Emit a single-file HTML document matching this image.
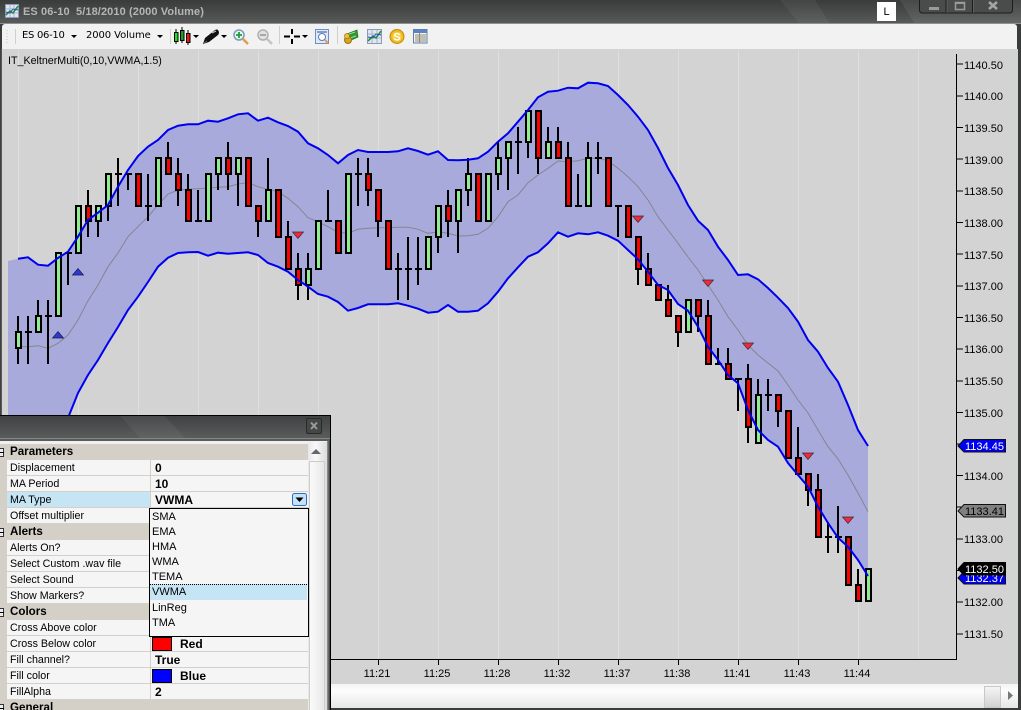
<!DOCTYPE html>
<html><head><meta charset="utf-8">
<style>
html,body{margin:0;padding:0;background:#333;width:1021px;height:710px;overflow:hidden}
#w{position:relative;width:1021px;height:710px;overflow:hidden;font-family:"Liberation Sans",sans-serif;background:#3a3c3c}
#w svg{position:absolute;left:0;top:0}
.a{position:absolute;white-space:pre}
.r{position:absolute;left:0;width:308px;height:15px;border-bottom:1px solid #d4d0c8;background:#f5f5f5;font-size:10.7px;line-height:17px;color:#000}
.r i{position:absolute;left:0;top:0;width:7px;height:16px;background:#d4d0c8}
.r u{position:absolute;left:150px;top:0;width:1px;height:16px;background:#d4d0c8}
.r span{position:absolute;left:10px;top:0}
.r b{position:absolute;left:155px;top:0;font-size:12px}
.h{position:absolute;left:0;width:308px;height:16px;background:#d4d0c8;font-weight:bold;font-size:11.6px;line-height:16px}
.h span{position:absolute;left:10px;top:0}
.h s{position:absolute;left:-5px;top:4px;width:7px;height:7px;border:1px solid #333;background:#eee}
.h s:after{content:"";position:absolute;left:1px;top:3px;width:7px;height:1px;background:#000}
.d{position:absolute;left:2px;width:155px;height:15px;font-size:11px;line-height:17px;color:#000}
.sw{position:absolute;left:152px;width:18px;height:12px;border:1px solid #000}
</style></head><body><div id="w">

<!-- title bar -->
<div class="a" style="left:0;top:0;width:1021px;height:24px;background:linear-gradient(#3a3c3c,#4c4e4e 60%,#5a5c5c)"></div>
<svg width="1021" height="24" viewBox="0 0 1021 24">
<polygon points="780,0 815,0 830,24 800,24" fill="#fff" opacity=".05"/>
<polygon points="900,0 1021,0 1021,24 915,24" fill="#fff" opacity=".07"/>
<!-- title icon -->
<rect x="5.500" y="4.500" width="13" height="13" fill="#dfe6f2" stroke="#8b9ab8"/>
<path d="M6 9h12M6 13h12M10 5v12M14 5v12" stroke="#a9b4c9" stroke-width="1"/>
<path d="M6 15l4-4 3 2 5-7" fill="none" stroke="#1e8a2e" stroke-width="1.500"/>
<path d="M6 12l4 1 3-4 5 1" fill="none" stroke="#2a52c0" stroke-width="1"/>
<!-- window buttons -->
<path d="M919.500 0v10q0 3 3 3h87q3 0 3-3V0" fill="#4a4c4c" stroke="#1c1c1c"/>
<path d="M946 0v13M972.500 0v13" stroke="#1c1c1c"/>
<path d="M947 0v13M973.500 0v13" stroke="#6a6a6a" opacity=".6"/>
<rect x="929" y="7" width="10" height="3" fill="#9a9a9a"/>
<rect x="955.500" y="2.500" width="9" height="7" fill="none" stroke="#9a9a9a" stroke-width="1.500"/>
<rect x="955" y="2" width="10" height="2" fill="#9a9a9a"/>
<path d="M989 2l8 7M997 2l-8 7" stroke="#a5a5a5" stroke-width="2.500"/>
</svg>
<div class="a" style="left:23px;top:5px;font:bold 11px/14px 'Liberation Sans',sans-serif;color:#b4b6b6;letter-spacing:.1px">ES 06-10  5/18/2010 (2000 Volume)</div>
<div class="a" style="left:877px;top:2px;width:19px;height:19px;background:#fff;border:0;font-size:11px;line-height:20px;text-align:center;color:#000">L</div>

<!-- toolbar -->
<div class="a" style="left:0;top:23px;width:1021px;height:1px;background:#8f9191"></div>
<div class="a" style="left:2px;top:24px;width:1015px;height:25px;background:#f2f2f2;border-radius:3px 3px 0 0"></div>

<!-- chart -->
<div class="a" style="left:2px;top:49px;width:1016px;height:635px;background:#d3d3d3"></div>
<div class="a" style="left:2px;top:684px;width:1016px;height:24px;background:linear-gradient(#f4f4f4,#fdfdfd 30%,#e6e6e6)"></div>
<div class="a" style="left:984px;top:686px;width:15px;height:20px;background:linear-gradient(#f5f5f5,#d2d2d2);border:1px solid #c8c8c8"></div>

<svg width="1021" height="710" viewBox="0 0 1021 710" style="font-family:'Liberation Sans',sans-serif;font-size:11px">
<!-- toolbar graphics -->
<path d="M7 30v1M7 33v1M7 36v1M7 39v1M7 42v1" stroke="#c4c4c4"/>
<path d="M15.500 29v15M170.500 29v15M279.500 26v18M337.500 26v18" stroke="#cfcfcf"/>
<path d="M71 35h6l-3 3zM157 35h6l-3 3zM193 35h6l-3 3zM221 35h6l-3 3zM302 35h6l-3 3z" fill="#000"/>
<!-- candle icon -->
<path d="M176 29v15M182 27v16M188 30v15" stroke="#000" stroke-width="1"/>
<rect x="174.500" y="32.500" width="3.500" height="9" fill="#1ce01c" stroke="#000"/>
<rect x="180.500" y="30.500" width="3.500" height="10" fill="#1f9d2c" stroke="#000"/>
<rect x="186.500" y="33.500" width="3.500" height="9" fill="#f01616" stroke="#000"/>
<!-- pen -->
<path d="M203 44l2-6 10-8q2-1 3 0l1 2q0 2-1 3l-9 7z" fill="#111"/>
<path d="M212 33l4-2" stroke="#c8c8c8" stroke-width="1"/>
<path d="M203 44l4-3" stroke="#666"/>
<!-- zoom in -->
<circle cx="239" cy="35" r="5" fill="#e8f3fa" stroke="#7f9cb0" stroke-width="1.500"/>
<path d="M243 39l5 5" stroke="#e69a4a" stroke-width="2.500"/>
<path d="M236 35h6M239 32v6" stroke="#18a038" stroke-width="1.800"/>
<!-- zoom out -->
<circle cx="263" cy="35" r="5" fill="#e2e2e2" stroke="#b0b0b0" stroke-width="1.500"/>
<path d="M267 39l5 5" stroke="#c4c4c4" stroke-width="2.500"/>
<path d="M260 35h6" stroke="#a0a0a0" stroke-width="1.800"/>
<!-- crosshair -->
<path d="M284 36.500h6M294 36.500h6M292 29v5M292 39v5" stroke="#000" stroke-width="2"/>
<!-- table magnifier -->
<rect x="315.500" y="29.500" width="13" height="14" fill="#dfe8f6" stroke="#6f8fc0"/>
<rect x="317" y="31" width="10" height="2" fill="#7f9fd0"/>
<circle cx="322" cy="37" r="3.500" fill="#fff" stroke="#5c7fb0"/>
<path d="M325 40l3 3" stroke="#e69a4a" stroke-width="2"/>
<!-- money -->
<path d="M347 34l10-4 1 7-9 4z" fill="#2e9a2e" stroke="#1f6f1f" stroke-width=".700"/>
<path d="M349 34l6-2M350 38l6-2" stroke="#9fe09f"/>
<circle cx="348" cy="40" r="3.500" fill="#d9a520" stroke="#9a7410"/>
<circle cx="347" cy="36" r="2.500" fill="#efc040" stroke="#9a7410" stroke-width=".700"/>
<!-- chart icon -->
<rect x="367.500" y="29.500" width="14" height="14" fill="#dfe6f2" stroke="#8b9ab8"/>
<path d="M368 34h13M368 38h13M372 30v13M377 30v13" stroke="#a9b4c9"/>
<path d="M368 41l5-5 3 2 5-7" fill="none" stroke="#1e8a2e" stroke-width="1.500"/>
<path d="M368 37l5 1 3-4 5 1" fill="none" stroke="#2a52c0"/>
<!-- coin -->
<circle cx="397" cy="36.500" r="7" fill="#efb81c" stroke="#c48a10"/>
<circle cx="397" cy="36.500" r="4.800" fill="#f8d040"/>
<text x="397" y="40.500" text-anchor="middle" font-size="11" font-weight="bold" fill="#fff">S</text>
<!-- table icon -->
<rect x="413.500" y="29.500" width="13.500" height="13.500" fill="#f4f4e8" stroke="#5c7fb0"/>
<rect x="414" y="30" width="13" height="3" fill="#5c84c4"/>
<path d="M415 35h11M415 37h11M415 39h11M415 41h11M419.500 33v10" stroke="#8a8a80"/>

<!-- grid -->
<path d="M18.500 50V659M78.500 50V659M138.500 50V659M198.500 50V659M258.500 50V659M318.500 50V659M378.500 50V659M438.500 50V659M498.500 50V659M558.500 50V659M618.500 50V659M678.500 50V659M738.500 50V659M798.500 50V659M858.500 50V659M918.500 50V659" stroke="#dedede"/>

<!-- fill -->
<path fill="#a9aadc" d="M8 261L18 258.700 28 257.300 38 264.700 48 265.700 58 258 68 251.700 78 236.700 88 220 98 212.700 108 205 118 186.700 128 170 138 156 148 146.700 158 140 168 130 178 125.700 188 124.300 198 124.300 208 120.700 218 121.700 228 118.300 238 114.300 248 113.300 258 120.700 268 117.700 278 122.300 288 126 298 131.700 308 143.300 318 148.300 328 155 338 163.300 348 155 358 150 368 152 378 152 388 152 398 151.300 408 148.300 418 151 428 154.700 438 151.300 448 160 458 160.300 468 159.700 478 158.300 488 151.700 498 141.700 508 133.300 518 121.700 528 110 538 97.300 548 91.700 558 90.700 568 87.700 578 88.300 588 82.700 598 83.300 608 86 618 95 628 105 638 116.700 648 130 658 148 668 168 678 185 688 205 698 220.700 708 230 718 246.700 728 260 738 275 748 274.300 758 279.300 768 288 778 297.700 788 308 798 321.700 808 340 818 351.700 828 368 838 381.700 848 405 858 430 868 446 868 576 858 560 848 546.700 838 537.700 828 523 818 506.700 808 486.700 798 475 788 463 778 446.700 768 440 758 430 748 410 738 383.300 728 375 718 360 708 346.700 698 326.700 688 310.700 678 304 668 290 658 285 648 271.700 638 259.300 628 250 618 240.700 608 235.700 598 232.300 588 234.300 578 233.300 568 236.700 558 232.300 548 243.300 538 252.300 528 256.700 518 267.300 508 278.300 498 291.700 488 303.300 478 310.700 468 311.700 458 311.700 448 305 438 311.700 428 312.700 418 308.700 408 305.700 398 303.300 388 304.300 378 304.300 368 304.300 358 308 348 310.700 338 302 328 296.700 318 294 308 286.700 298 280 288 271.700 278 266.700 268 263 258 255 248 252.300 238 253 228 253.700 218 252.700 208 255.700 198 252 188 252.300 178 253 168 257.700 158 266.700 148 282 138 296.700 128 310 118 327 108 343 98 360 88 375 78 393 68 420 60 440 8 440z"/>

<!-- middle -->
<path fill="none" stroke="#85858f" stroke-width="1" d="M18 346.700L28 346.700 38 345.700 48 348.300 58 343.300 68 335 78 320 88 300.700 98 285 108 266.700 118 253 128 236.700 138 226.700 148 216.700 158 205 168 194 178 190 188 189.300 198 188.700 208 188.300 218 187.300 228 186.700 238 184 248 182.700 258 186.700 268 189.300 278 191.700 288 198.300 298 206.700 308 217.700 318 221.700 328 226.700 338 232.300 348 233.300 358 229.300 368 228.300 378 227.700 388 227.700 398 227.300 408 227.300 418 229.300 428 233.300 438 231.700 448 233.300 458 236 468 235.700 478 234.300 488 228.300 498 216.700 508 201.700 518 195 528 182.700 538 175 548 168.300 558 161 568 161.700 578 160.700 588 158.300 598 158.300 608 160.700 618 168.300 628 176.700 638 186.700 648 200 658 216.700 668 230 678 243.300 688 257 698 270 708 285 718 300 728 316.700 738 330 748 345 758 355 768 363 778 371 788 385 798 400 808 413 818 430 828 446.700 838 459 848 475 858 493 868 511.700"/>

<!-- wicks -->
<path stroke="#000" stroke-width="2" fill="none" d="M18 316V364M28 316V364M38 300V332M48 300V364M68 253V285M88 190V237M98 206V237M108 174V221M118 158V206M128 174V190M148 174V221M168 142V174M178 158V206M188 174V221M198 190V221M218 158V190M228 142V190M238 158V206M258 206V237M268 158V221M288 221V269M298 253V300M308 253V300M328 190V221M358 158V206M368 158V206M378 190V237M398 253V300M408 237V300M418 237V285M438 206V253M448 190V237M458 190V253M468 158V206M498 142V190M508 142V190M518 127V174M528 111V158M538 111V174M548 127V158M558 127V158M568 142V206M578 174V206M588 142V206M598 142V174M618 206V237M638 237V285M648 253V285M668 285V316M678 316V347M698 300V332M708 300V364M718 348V364M728 348V379M738 379V411M748 364V443M758 379V443M768 379V411M778 395V427M798 427V474M808 474V506M818 474V537M828 522V553M838 506V553M858 569V601"/>
<!-- doji ticks -->
<path stroke="#000" stroke-width="2" fill="none" d="M25 332h7M45 316h7M65 253h7M115 174h7M125 174h7M145 206h7M195 221h7M325 221h7M355 174h7M395 269h7M405 269h7M415 269h7M515 142h7M575 206h7M595 158h7M615 206h7M715 364h7M735 379h7M765 395h7M825 537h7M835 537h7"/>
<!-- green bodies -->
<path stroke="#000" stroke-width="2" fill="#90ee90" d="M16 332h5v16h-5zM36 316h5v16h-5zM56 253h5v63h-5zM76 206h5v47h-5zM96 206h5v15h-5zM106 174h5v32h-5zM156 158h5v48h-5zM206 174h5v47h-5zM216 158h5v16h-5zM236 158h5v16h-5zM266 190h5v31h-5zM306 269h5v16h-5zM316 221h5v48h-5zM346 174h5v79h-5zM426 237h5v32h-5zM436 206h5v31h-5zM456 190h5v31h-5zM466 174h5v16h-5zM486 174h5v47h-5zM496 158h5v16h-5zM506 142h5v16h-5zM526 111h5v31h-5zM546 142h5v16h-5zM586 158h5v48h-5zM686 300h5v32h-5zM756 395h5v48h-5zM866 569h5v32h-5z"/>
<!-- red bodies -->
<path stroke="#000" stroke-width="2" fill="#ff0000" d="M86 206h5v15h-5zM136 174h5v32h-5zM166 158h5v16h-5zM176 174h5v16h-5zM186 190h5v31h-5zM226 158h5v16h-5zM246 158h5v48h-5zM256 206h5v15h-5zM276 190h5v47h-5zM286 237h5v32h-5zM296 269h5v16h-5zM336 221h5v32h-5zM366 174h5v16h-5zM376 190h5v31h-5zM386 221h5v48h-5zM446 206h5v15h-5zM476 174h5v47h-5zM536 111h5v47h-5zM556 142h5v16h-5zM566 158h5v48h-5zM606 158h5v48h-5zM626 206h5v31h-5zM636 237h5v32h-5zM646 269h5v16h-5zM656 285h5v15h-5zM666 300h5v16h-5zM676 316h5v16h-5zM696 300h5v16h-5zM706 316h5v48h-5zM726 364h5v15h-5zM746 379h5v48h-5zM776 395h5v16h-5zM786 411h5v47h-5zM796 458h5v16h-5zM806 474h5v16h-5zM816 490h5v47h-5zM846 537h5v48h-5zM856 585h5v16h-5z"/>

<!-- bands -->
<path fill="none" stroke="#0000f0" stroke-width="2" d="M18 258.700L28 257.300 38 264.700 48 265.700 58 258 68 251.700 78 236.700 88 220 98 212.700 108 205 118 186.700 128 170 138 156 148 146.700 158 140 168 130 178 125.700 188 124.300 198 124.300 208 120.700 218 121.700 228 118.300 238 114.300 248 113.300 258 120.700 268 117.700 278 122.300 288 126 298 131.700 308 143.300 318 148.300 328 155 338 163.300 348 155 358 150 368 152 378 152 388 152 398 151.300 408 148.300 418 151 428 154.700 438 151.300 448 160 458 160.300 468 159.700 478 158.300 488 151.700 498 141.700 508 133.300 518 121.700 528 110 538 97.300 548 91.700 558 90.700 568 87.700 578 88.300 588 82.700 598 83.300 608 86 618 95 628 105 638 116.700 648 130 658 148 668 168 678 185 688 205 698 220.700 708 230 718 246.700 728 260 738 275 748 274.300 758 279.300 768 288 778 297.700 788 308 798 321.700 808 340 818 351.700 828 368 838 381.700 848 405 858 430 868 446"/>
<path fill="none" stroke="#0000f0" stroke-width="2" d="M60 432L68 418 78 393 88 375 98 360 108 343 118 327 128 310 138 296.700 148 282 158 266.700 168 257.700 178 253 188 252.300 198 252 208 255.700 218 252.700 228 253.700 238 253 248 252.300 258 255 268 263 278 266.700 288 271.700 298 280 308 286.700 318 294 328 296.700 338 302 348 310.700 358 308 368 304.300 378 304.300 388 304.300 398 303.300 408 305.700 418 308.700 428 312.700 438 311.700 448 305 458 311.700 468 311.700 478 310.700 488 303.300 498 291.700 508 278.300 518 267.300 528 256.700 538 252.300 548 243.300 558 232.300 568 236.700 578 233.300 588 234.300 598 232.300 608 235.700 618 240.700 628 250 638 259.300 648 271.700 658 285 668 290 678 304 688 310.700 698 326.700 708 346.700 718 360 728 375 738 383.300 748 410 758 430 768 440 778 446.700 788 463 798 475 808 486.700 818 506.700 828 523 838 537.700 848 546.700 858 560 868 576"/>

<!-- markers -->
<g fill="#f02a36" stroke="#3a2a3a" stroke-width=".700">
<path d="M292.500 232h11l-5.500 6.500zM632.500 216h11l-5.500 6.500zM702.500 280h11l-5.500 6.500zM742.500 343h11l-5.500 6.500zM802.500 453h11l-5.500 6.500zM842.500 517h11l-5.500 6.500z"/>
</g>
<g fill="#2a3ad8" stroke="#1a1a3a" stroke-width=".700">
<path d="M72.500 275h11l-5.500-6.500zM52.500 338h11l-5.500-6.500z"/>
</g>

<!-- axes -->
<path d="M956.500 54V659.500H0" fill="none" stroke="#000"/>
<path d="M957 64h6M957 96h6M957 127.500h6M957 159h6M957 191h6M957 222.500h6M957 254h6M957 286h6M957 317.500h6M957 349h6M957 381h6M957 412.500h6M957 444h6M957 475.500h6M957 507h6M957 539h6M957 570.500h6M957 602h6M957 634h6" stroke="#000"/>
<path d="M378.500 660v5M438.500 660v5M498.500 660v5M558.500 660v5M618.500 660v5M678.500 660v5M738.500 660v5M798.500 660v5M858.500 660v5" stroke="#000"/>
<g fill="#000" font-size="11">
<text x="964" y="69">1140.50</text><text x="964" y="100">1140.00</text><text x="964" y="132">1139.50</text><text x="964" y="164">1139.00</text><text x="964" y="195">1138.50</text><text x="964" y="227">1138.00</text><text x="964" y="259">1137.50</text><text x="964" y="290">1137.00</text><text x="964" y="322">1136.50</text><text x="964" y="353">1136.00</text><text x="964" y="385">1135.50</text><text x="964" y="417">1135.00</text><text x="964" y="480">1134.00</text><text x="964" y="512">1133.50</text><text x="964" y="543">1133.00</text><text x="964" y="575">1132.50</text><text x="964" y="606">1132.00</text><text x="964" y="638">1131.50</text>
</g>
<g fill="#000" font-size="11" text-anchor="middle">
<text x="377" y="677">11:21</text><text x="437" y="677">11:25</text><text x="497" y="677">11:28</text><text x="557" y="677">11:32</text><text x="617" y="677">11:37</text><text x="677" y="677">11:38</text><text x="737" y="677">11:41</text><text x="797" y="677">11:43</text><text x="857" y="677">11:44</text>
</g>
<!-- price tags -->
<path d="M958 446l6-6.500h41.500v12.500H964z" fill="#0000f0" stroke="#111"/>
<text x="965" y="450" fill="#fff" font-size="11">1134.45</text>
<path d="M958 511l6-6.500h41.500v12.500H964z" fill="#808080" stroke="#111"/>
<text x="965" y="515" fill="#000" font-size="11">1133.41</text>
<path d="M958 578l6-6.500h41.500v12.500H964z" fill="#0000f0" stroke="#111"/>
<text x="965" y="582" fill="#fff" font-size="11">1132.37</text>
<path d="M958 569l6-6.500h41.500v12.500H964z" fill="#000" stroke="#000"/>
<text x="965" y="573" fill="#fff" font-size="11">1132.50</text>
<!-- scroll arrow -->
<path d="M1008 691v9l5-4.500z" fill="#777"/>
</svg>

<div class="a" style="left:0;top:49px;width:2px;height:366px;background:linear-gradient(90deg,#333,#666)"></div>
<div class="a" style="left:8px;top:54px;font-size:10.7px;line-height:14px;color:#000">IT_KeltnerMulti(0,10,VWMA,1.5)</div>
<div class="a" style="left:22px;top:29px;font:10px/14px 'DejaVu Sans',sans-serif;color:#000;letter-spacing:-.3px">ES 06-10</div>
<div class="a" style="left:86px;top:29px;font:10px/14px 'DejaVu Sans',sans-serif;color:#000;letter-spacing:-.1px">2000 Volume</div>

<!-- panel -->
<div class="a" style="left:0;top:415px;width:331px;height:295px;background:#000"></div>
<div class="a" style="left:0;top:416px;width:330px;height:294px;background:linear-gradient(#3f4242,#5a5c5c 22px,#5a5c5c)"></div>
<div class="a" style="left:0;top:438px;width:330px;height:1px;background:#858787"></div>
<div class="a" style="left:0;top:441px;width:328px;height:269px;background:#f0f0f0"></div>
<div class="a" style="left:327px;top:441px;width:3px;height:269px;background:linear-gradient(90deg,#9a9a9a,#3a3a3a)"></div>
<svg width="331" height="30" viewBox="0 0 331 30" style="left:0;top:415px">
<polygon points="120,1 165,1 185,23 140,23" fill="#fff" opacity=".05"/>
<rect x="306.500" y="3.500" width="15" height="15" rx="1.500" fill="#454747" stroke="#2a2a2a"/>
<path d="M311 7.500l6 6.500M317 7.500l-6 6.500" stroke="#9a9a9a" stroke-width="2"/>
</svg>
<div class="a" style="left:308px;top:442px;width:19px;height:268px;background:linear-gradient(90deg,#e8e8e8,#f8f8f8 40%,#dcdcdc)"></div>
<div class="a" style="left:309px;top:461px;width:16px;height:249px;background:linear-gradient(90deg,#fafafa,#e8e8e8);border-left:1px solid #ccc;border-right:1px solid #ccc;border-top:1px solid #ccc;box-sizing:border-box;border-radius:2px 2px 0 0"></div>
<svg width="20" height="10" viewBox="0 0 20 10" style="left:308px;top:447px"><path d="M2 7l5-5 5 5z" fill="#666" transform="translate(1 0)"/></svg>

<div id="g" style="position:absolute;left:0;top:0">
<div class="h" style="top:444px"><s></s><span>Parameters</span></div>
<div class="r" style="top:460px"><i></i><u></u><span>Displacement</span><b>0</b></div>
<div class="r" style="top:476px"><i></i><u></u><span>MA Period</span><b>10</b></div>
<div class="r" style="top:492px"><i></i><u></u><span style="left:7px;width:140px;padding-left:3px;background:#c5e5f5;height:15px">MA Type</span><b>VWMA</b></div>
<div class="r" style="top:508px"><i></i><u></u><span>Offset multiplier</span></div>
<div class="h" style="top:524px"><s></s><span>Alerts</span></div>
<div class="r" style="top:540px"><i></i><u></u><span>Alerts On?</span></div>
<div class="r" style="top:556px"><i></i><u></u><span>Select Custom .wav file</span></div>
<div class="r" style="top:572px"><i></i><u></u><span>Select Sound</span></div>
<div class="r" style="top:588px"><i></i><u></u><span>Show Markers?</span></div>
<div class="h" style="top:604px"><s></s><span>Colors</span></div>
<div class="r" style="top:620px"><i></i><u></u><span>Cross Above color</span></div>
<div class="r" style="top:636px"><i></i><u></u><span>Cross Below color</span><b style="left:180px">Red</b></div>
<div class="r" style="top:652px"><i></i><u></u><span>Fill channel?</span><b>True</b></div>
<div class="r" style="top:668px"><i></i><u></u><span>Fill color</span><b style="left:180px">Blue</b></div>
<div class="r" style="top:684px"><i></i><u></u><span>FillAlpha</span><b>2</b></div>
<div class="h" style="top:700px"><s></s><span>General</span></div>
</div>
<div class="sw" style="top:637px;background:#f00"></div>
<div class="sw" style="top:669px;background:#00f"></div>

<!-- combo button -->
<svg width="16" height="14" viewBox="0 0 16 14" style="left:292px;top:493px">
<rect x=".5" y=".5" width="14" height="12" rx="2" fill="#c5e2f8" stroke="#2a6fc0"/>
<path d="M3.500 4.500h8l-4 4.500z" fill="#000"/>
</svg>
<!-- dropdown -->
<div class="a" style="left:149px;top:508px;width:158px;height:127px;background:#f5f5f5;border:1px solid #000">
<div class="d" style="top:0">SMA</div>
<div class="d" style="top:15px">EMA</div>
<div class="d" style="top:30px">HMA</div>
<div class="d" style="top:45px">WMA</div>
<div class="d" style="top:60px">TEMA</div>
<div class="d" style="top:75px;left:0;width:157px;padding-left:2px;box-sizing:border-box;background:#c5e5f5;height:16px;border-top:1px dotted #000;line-height:15px">VWMA</div>
<div class="d" style="top:91px">LinReg</div>
<div class="d" style="top:106px">TMA</div>
</div>
</div></body></html>
